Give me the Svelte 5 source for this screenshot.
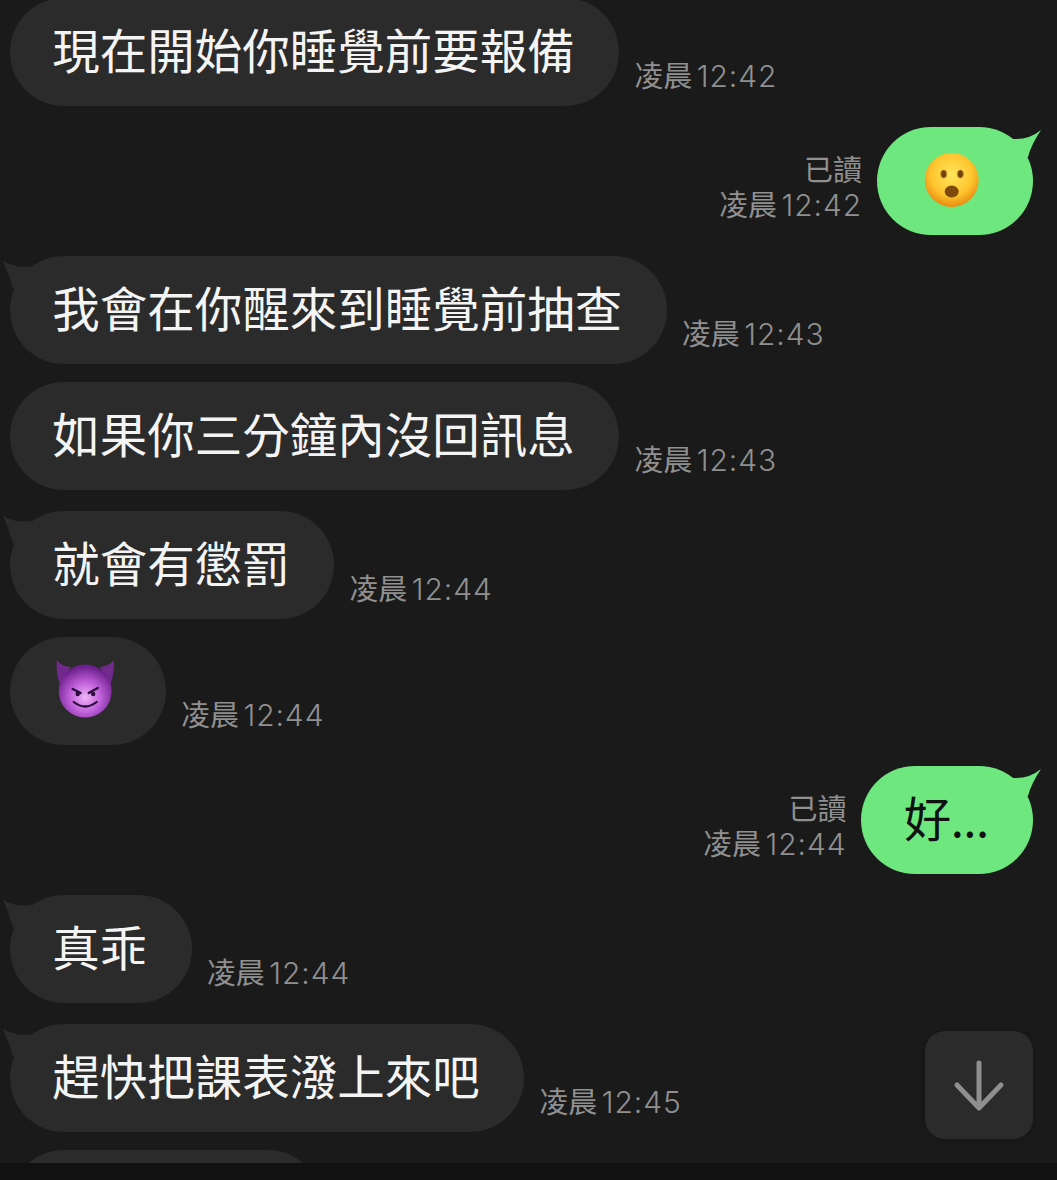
<script>
  const messages = [
    { text: "現在開始你睡覺前要報備", time: "12:42", first: true },
    { mine: true, emoji: "hushed", time: "12:42", tail: true },
    { text: "我會在你醒來到睡覺前抽查", time: "12:43", tail: true },
    { text: "如果你三分鐘內沒回訊息", time: "12:43" },
    { text: "就會有懲罰", time: "12:44", tail: true },
    { emoji: "devil", time: "12:44" },
    { mine: true, text: "好...", time: "12:44", tail: true },
    { text: "真乖", time: "12:44", tail: true },
    { text: "趕快把課表潑上來吧", time: "12:45", tail: true },
  ];
</script>

{#snippet hushed()}
  <svg class="emoji" viewBox="1.3 1 69.2 68">
    <defs>
      <radialGradient id="hush" cx="50%" cy="40%" r="60%">
        <stop offset="0" stop-color="#ffe45c" />
        <stop offset="0.65" stop-color="#fdc52e" />
        <stop offset="1" stop-color="#e88a10" />
      </radialGradient>
    </defs>
    <circle cx="34" cy="34" r="27" fill="url(#hush)" />
    <ellipse cx="26" cy="28" rx="3" ry="4" fill="#6f4310" stroke="#c98a20" stroke-width="0.8" />
    <ellipse cx="42.7" cy="28" rx="3" ry="4" fill="#6f4310" stroke="#c98a20" stroke-width="0.8" />
    <ellipse cx="34" cy="45.5" rx="7" ry="6" fill="#7d4a0c" />
  </svg>
{/snippet}

{#snippet devil()}
  <svg class="emoji" viewBox="1.3 1 69.2 68">
    <defs>
      <radialGradient id="imp" cx="50%" cy="62%" r="58%">
        <stop offset="0" stop-color="#eeb4f6" />
        <stop offset="0.5" stop-color="#c060da" />
        <stop offset="1" stop-color="#6c1f8c" />
      </radialGradient>
    </defs>
    <path d="M6 4Q10 10 20 11L9 28Q5 16 6 4Z" fill="#6f2a8c" />
    <path d="M63 4Q59 10 49 11L60 28Q64 16 63 4Z" fill="#6f2a8c" />
    <circle cx="34.5" cy="35" r="26.5" fill="url(#imp)" />
    <path d="M22 33L30 37" stroke="#2c0b3d" stroke-width="2.4" stroke-linecap="round" />
    <path d="M47 32L38 37" stroke="#2c0b3d" stroke-width="2.4" stroke-linecap="round" />
    <circle cx="27" cy="38" r="2.2" fill="#2c0b3d" />
    <circle cx="42.5" cy="38" r="2.2" fill="#2c0b3d" />
    <path d="M23 46Q34.5 55 46 46" fill="none" stroke="#2c0b3d" stroke-width="2.2" stroke-linecap="round" />
  </svg>
{/snippet}

<div class="screen">
  <div class="chat">
    {#each messages as m}
      <div class="row" class:mine={m.mine} class:tailed={m.tail} class:first={m.first}>
        {#if m.mine}
          <div class="meta">
            <div>已讀</div>
            <div>凌晨 <span class="num">{m.time}</span></div>
          </div>
        {/if}
        <div class="bubble">
          {#if m.tail}
            <svg class="tail" viewBox="0 0 40 40">
              {#if m.mine}
                <path d="M38 3Q26 13 10 12L10 32L25 30Q28 18 38 3Z" />
              {:else}
                <path d="M3 5Q18 13 32 10L30 35L13 32Q9 18 3 5Z" />
              {/if}
            </svg>
          {/if}
          {#if m.emoji === "hushed"}
            {@render hushed()}
          {:else if m.emoji === "devil"}
            {@render devil()}
          {:else}
            <span class="text">{m.text}</span>
          {/if}
        </div>
        {#if !m.mine}
          <div class="meta">
            <div>凌晨 <span class="num">{m.time}</span></div>
          </div>
        {/if}
      </div>
    {/each}
    <div class="row">
      <div class="bubble cut"></div>
    </div>
  </div>

  <button class="down" aria-label="Scroll to bottom">
    <svg viewBox="0 0 108 108" width="108" height="108">
      <path d="M54 32V76M32 54L54 77L76 54" fill="none" stroke="#8f8f8f" stroke-width="5" stroke-linecap="round" stroke-linejoin="round" />
    </svg>
  </button>

  <div class="footer"></div>
</div>

<style>
  :global(body) { background: #1a1a1a; }
  .screen {
    position: relative;
    display: flex; flex-direction: column;
    height: 1180px; overflow: hidden;
    background: #1a1a1a;
    font-family: "Noto Sans CJK TC", "Noto Sans", sans-serif;
  }
  .chat {
    flex: 1; min-height: 0; overflow: hidden;
    display: flex; flex-direction: column; gap: 18px;
    padding: 0 24px 0 10px;
  }
  .row { display: flex; align-items: flex-end; gap: 15px; flex-shrink: 0; }
  .row.first { margin-top: -2px; }
  .row.tailed { margin-top: 3px; }
  .row.mine { justify-content: flex-end; }
  .bubble {
    position: relative;
    display: flex; align-items: center;
    height: 108px; padding: 0 44.5px 0 42.3px;
    border-radius: 54px;
    background: #2b2b2b; color: #f4f4f4;
    font-size: 47.5px; line-height: 1;
  }
  .mine .bubble { background: #6ee77f; color: #111; }
  .bubble.cut { width: 312px; padding: 0; }
  .text { position: relative; white-space: nowrap; top: -3px; }
  .mine .text { letter-spacing: -0.6px; }
  .emoji { display: block; width: 69.2px; height: 68px; }
  .tail {
    position: absolute; top: 0; left: -10px;
    width: 40px; height: 40px; fill: #2b2b2b;
  }
  .mine .tail { left: auto; right: -10px; fill: #6ee77f; }
  .meta {
    padding-bottom: 12px;
    color: #909090; font-size: 29px; line-height: 35px;
    white-space: nowrap; text-align: left;
  }
  .mine .meta { text-align: right; }
  .num {
    font-family: Inter, "Noto Sans", sans-serif; font-weight: 300;
    font-size: 30px; letter-spacing: 0.9px; margin-left: -2px;
  }
  .down {
    position: absolute; left: 925px; top: 1031px;
    width: 108px; height: 108px; padding: 0; border: 0;
    border-radius: 20px; background: #2b2b2b;
    box-shadow: 0 0 6px rgba(0, 0, 0, 0.25);
  }
  .down svg { display: block; }
  .footer { height: 17px; flex-shrink: 0; background: #111; }
</style>
